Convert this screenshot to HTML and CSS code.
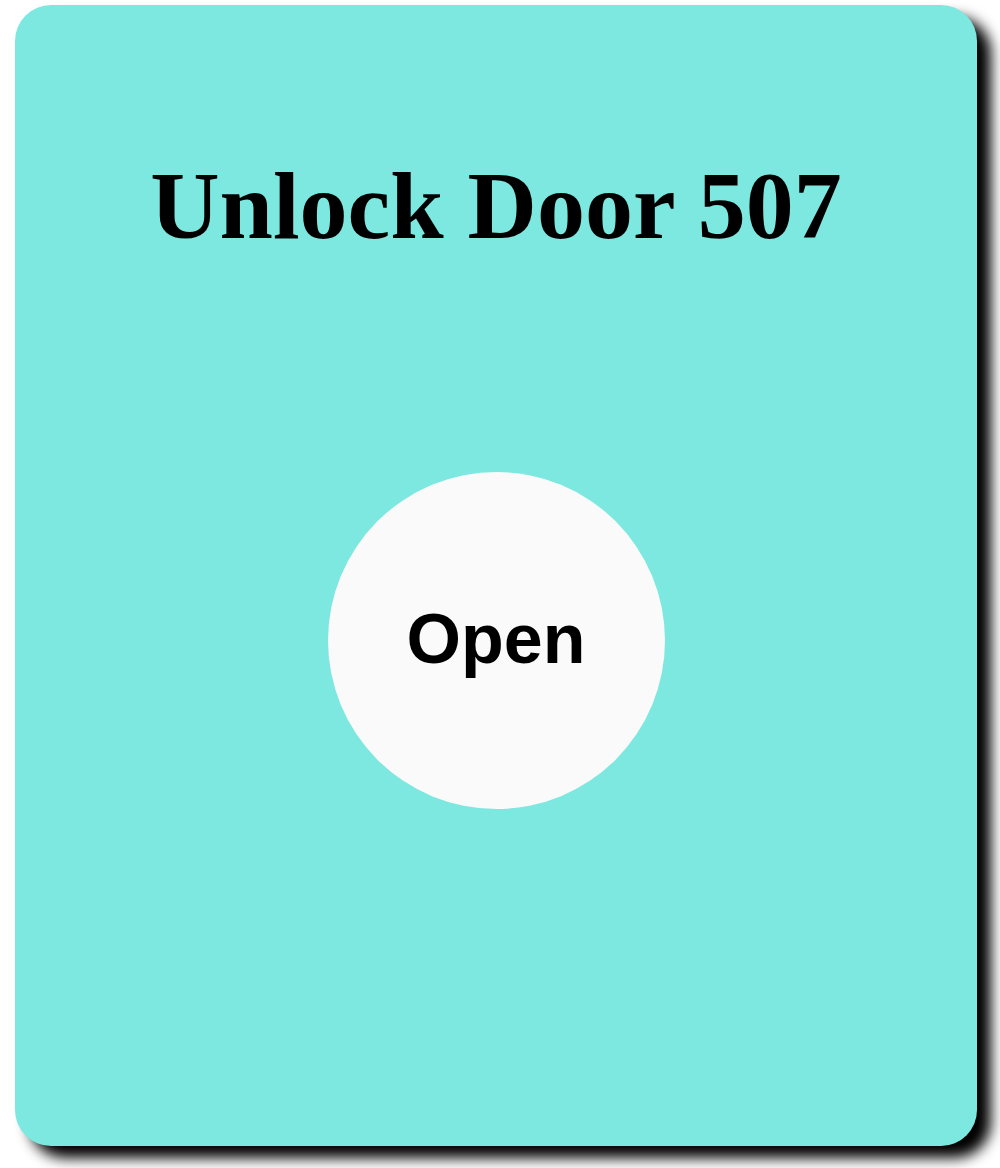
FILE: index.html
```html
<!DOCTYPE html>
<html lang="en">
<head>
<meta charset="utf-8">
<title>Unlock Door 507</title>
<link rel="stylesheet" href="styles.css">
</head>
<body>
<main class="card">
  <h1 class="title">Unlock Door 507</h1>
  <button class="open-btn" type="button">Open</button>
</main>
</body>
</html>
```
FILE: styles.css
```css
html, body {
  margin: 0;
  padding: 0;
  background: #ffffff;
}
body {
  padding: 5px 0 23px 15px;
}
.card {
  box-sizing: border-box;
  width: 962px;
  height: 1141px;
  background: #7de8df;
  border-radius: 36px;
  box-shadow: 14px 12px 14px #000000;
  display: flex;
  flex-direction: column;
  align-items: center;
  padding-top: 145px;
}
.title {
  margin: 0;
  font-family: "Liberation Serif", "Times New Roman", serif;
  font-weight: bold;
  font-size: 96px;
  line-height: normal;
  color: #000;
}
.open-btn {
  margin-top: 211px;
  width: 337px;
  height: 337px;
  border: none;
  border-radius: 50%;
  background: #fafafa;
  font-family: "Liberation Sans", Arial, sans-serif;
  font-weight: bold;
  font-size: 70px;
  color: #000;
  padding: 0 0 4px 0;
  display: flex;
  align-items: center;
  justify-content: center;
}
```
